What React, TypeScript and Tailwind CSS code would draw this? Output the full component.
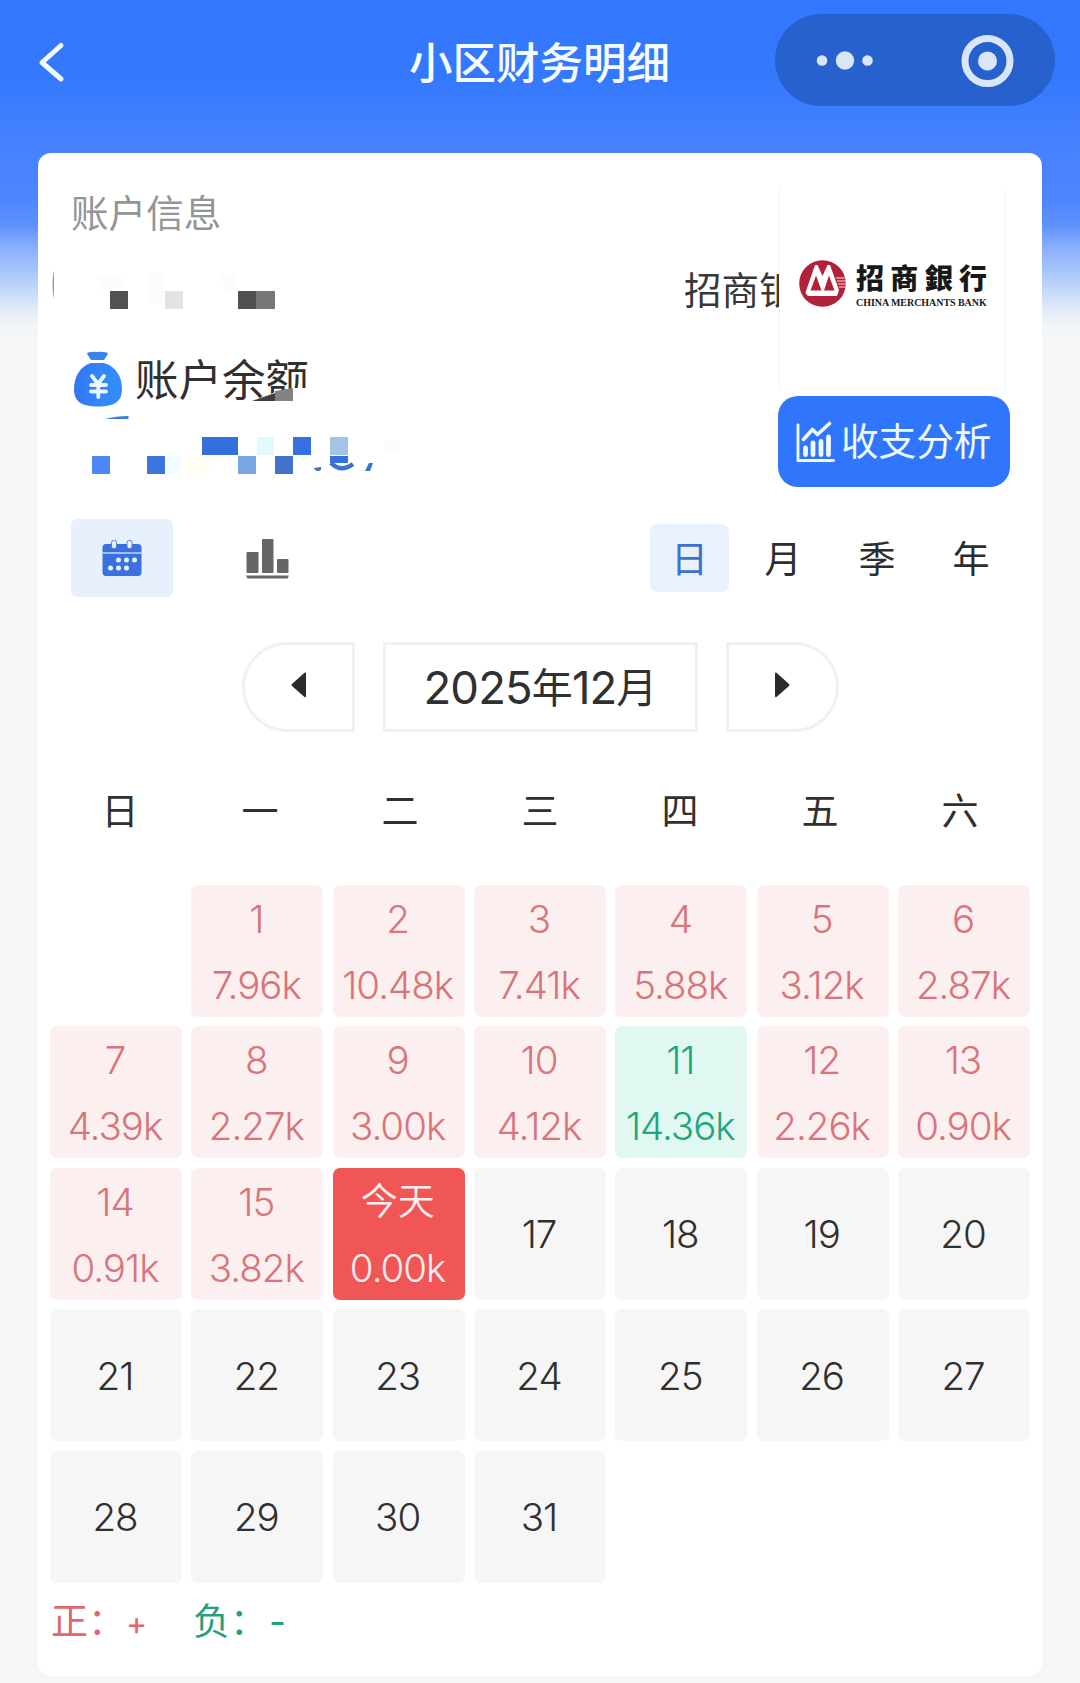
import React from "react";

type Tone = "up" | "down" | "today" | "idle";
type Day = { label: string; amount?: string; tone: Tone };

const amounts = [
  "7.96k", "10.48k", "7.41k", "5.88k", "3.12k", "2.87k", "4.39k", "2.27k",
  "3.00k", "4.12k", "14.36k", "2.26k", "0.90k", "0.91k", "3.82k", "0.00k",
];

const days: Day[] = Array.from({ length: 31 }, (_, i) => {
  const n = i + 1;
  if (n === 16) return { label: "今天", amount: amounts[i], tone: "today" };
  if (n === 11) return { label: "11", amount: amounts[i], tone: "down" };
  if (n < 16) return { label: String(n), amount: amounts[i], tone: "up" };
  return { label: String(n), tone: "idle" };
});

const tones: Record<Tone, string> = {
  up: "bg-[#fcefef] text-[#d8757a]",
  down: "bg-[#e1f8f2] text-[#1fa67a]",
  today: "bg-[#f05656] text-[#fff0f0]",
  idle: "bg-[#f6f6f6] text-[#303030]",
};

function DayCell({ day }: { day: Day }) {
  return (
    <div className={`flex h-[132px] flex-col items-center rounded-[7px] pt-px pr-[2px] font-[350] ${tones[day.tone]} ${day.amount ? "" : "justify-center"}`}>
      <span className={`leading-[66px] whitespace-nowrap ${day.tone === "today" ? "text-[37px]" : "text-[38.500px] tracking-[-1px]"}`}>{day.label}</span>
      {day.amount && <span className="text-[38.500px] leading-[66px] tracking-[-1px] whitespace-nowrap">{day.amount}</span>}
    </div>
  );
}

function Header() {
  return (
    <header className="flex h-[153px] items-start">
      <svg className="mt-[40px] ml-[36px] h-[44px] w-[32px]" viewBox="0 0 32 44" fill="none" stroke="#f0faff" strokeWidth="5" strokeLinecap="round" strokeLinejoin="round">
        <path d="M25 5.500L6 22.500L25 39" />
      </svg>
      <h1 className="mt-[33px] ml-[341px] w-[270px] text-[43.500px] leading-[60px] font-medium whitespace-nowrap text-[#f5fbff]">小区财务明细</h1>
      <div className="mt-[14px] ml-[96px] flex h-[92px] w-[280px] items-center rounded-full bg-[#2761cd]">
        <svg className="h-full w-full" viewBox="0 0 280 92" fill="#d9e5f8">
          <circle cx="47" cy="46.500" r="5.300" />
          <circle cx="70" cy="46.500" r="9.200" />
          <circle cx="92.500" cy="46.500" r="5.300" />
          <circle cx="212.500" cy="47" r="22.500" fill="none" stroke="#d9e5f8" strokeWidth="7" />
          <circle cx="212.500" cy="47" r="9.500" />
        </svg>
      </div>
    </header>
  );
}

function BankLogo() {
  return (
    <div className="flex h-[202px] w-[227px] shrink-0 items-center border-x border-[#f3f3f3] bg-white pb-[11px] pl-[19px]">
      <svg className="h-[47px] w-[47px] shrink-0" viewBox="0 0 47 47">
        <circle cx="23.500" cy="23.500" r="23.300" fill="#b3203a" />
        <path d="M7 31L16 5H18.500L23.500 16L28.500 5H31L40 30L38 36H9L6.500 33Z" fill="#fff" />
        <path d="M17 15.500L22.500 30.500H11.500ZM30 15.500L35.500 30.500H25Z" fill="#b3203a" />
        <path d="M22 23L24 29L25.500 23Z" fill="#fff" />
        <path d="M37 18H47M38 21H47M39 24H47M40 27H47" stroke="#f6dfe3" strokeWidth="1" />
      </svg>
      <div className="ml-[10px] w-[131px] pt-[3px]">
        <div className="flex justify-between text-[28px] leading-[34px] font-black text-[#181818]">
          <span>招</span><span>商</span><span>銀</span><span>行</span>
        </div>
        <div className="mt-[2px] font-['Liberation_Serif',serif] text-[10px] leading-[10px] font-bold tracking-[-0.05px] whitespace-nowrap text-[#181818]">CHINA MERCHANTS BANK</div>
      </div>
    </div>
  );
}

function Account() {
  return (
    <section className="relative h-[345px] shrink-0">
      <div className="flex h-full justify-between pr-[32px] pl-[33px]">
        <div className="pt-[34px]">
          <h2 className="text-[37.600px] leading-[54px] whitespace-nowrap text-[#959595]">账户信息</h2>
          <div className="mt-[108px] flex h-[60px] items-center">
            <svg className="h-[56px] w-[52px]" viewBox="0 0 52 56">
              <defs>
                <linearGradient id="bag" x1="0" x2="1"><stop stopColor="#3277f4" /><stop offset="1" stopColor="#3490fb" /></linearGradient>
              </defs>
              <path d="M17 1.500Q15.500 1.500 16.500 3.500L20 9H33L36.500 3.500Q37.500 1.500 35.500 1.500Q31 .5 26 1Q21 .5 17 1.500Z" fill="#3a82ec" />
              <path d="M20 12H33C45 15 51 26 51 38C51 51 43 55.500 27 55.500C11 55.500 3 51 3 38C3 26 9 15 20 12Z" fill="url(#bag)" />
              <path d="M21 25L27 33L33 25M20 34H35M20 40.500H35M27.300 33V46" fill="none" stroke="#eaf7ff" strokeWidth="3.800" strokeLinecap="round" />
            </svg>
            <span className="ml-[12px] pt-[2px] text-[43.500px] leading-[60px] text-[#303030]">账户余额</span>
          </div>
        </div>
        <div className="flex flex-col items-end pt-[35px]">
          <div className="flex h-[208px] items-start">
            <div className="w-[95px] overflow-hidden text-[37.600px] leading-[54px] whitespace-nowrap text-[#383838]"><div className="pt-[76px]">招商银行</div></div>
            <div className="mr-[4px]"><BankLogo /></div>
          </div>
          <button className="flex h-[91px] w-[232px] items-center rounded-[20px] bg-[#3076fd] pl-[18px] text-[37.600px] whitespace-nowrap text-[#eefaff]">
            <svg className="mr-[6px] h-[42px] w-[39px] shrink-0" viewBox="0 0 39 42" fill="none" stroke="#eefaff" strokeLinecap="round">
              <path d="M2 4V39.500H37.500" strokeWidth="2.800" />
              <path d="M9.500 27V33.500M17 22V33.500M25 20.500V33.500M32.500 16V33.500" strokeWidth="4.800" />
              <path d="M7.500 18.500L16.500 8.500L21.500 13.500L33.500 2.500" strokeWidth="3.600" strokeLinejoin="round" />
            </svg>
            <span className="pt-px leading-[54px]">收支分析</span>
          </button>
        </div>
      </div>
      {/* Privacy mosaic over the account number and balance */}
      <svg className="absolute top-[97px] left-[12px] h-[240px] w-[388px]" viewBox="50 250 388 240">
        <path d="M54 270Q51 284 54 299Z" fill="#999" />
        <path d="M96 277H124V291H104ZM148 273H163V304H148ZM220 274L236 275L238 291H226Z" fill="#fcfcfc" />
        <path d="M110 291h18v18h-18z" fill="#525252" />
        <path d="M165 291h18v18h-18z" fill="#e3e3e3" />
        <path d="M238 291h18v18h-18z" fill="#505050" />
        <path d="M256 291h19v18h-19z" fill="#777" />
        <path d="M275 392L294 388H310V404H250Z" fill="#fff" />
        <path d="M252 401L275 393V401Z" fill="#404040" />
        <path d="M275 391L293 388V401H275Z" fill="#828282" />
        <path d="M105 419Q116 416 128.500 416V419Z" fill="#397cdc" />
        <path d="M92 456h18v18H92z" fill="#4f86f7" />
        <path d="M147 456h18v18h-18z" fill="#3e74dd" />
        <path d="M166 456h14v18h-14z" fill="#f1feff" />
        <path d="M183 456h28v18h-28z" fill="#fffff4" />
        <path d="M202 437h36v18h-36z" fill="#3370dc" />
        <path d="M238 456h18v18h-18z" fill="#79a5e1" />
        <path d="M257 437h17v18h-17z" fill="#e2fafb" />
        <path d="M275 456h18v18h-18z" fill="#4472cb" />
        <path d="M293 437h18v18h-18z" fill="#3670e6" />
        <path d="M330 437h18v18h-18z" fill="#a5c3e7" />
        <path d="M330 456h18v7h-18z" fill="#3670df" />
        <path d="M314 468L321 467Q322 471 318 471Q315 471 314 468Z" fill="#4770b5" />
        <path d="M331 463Q341 473 353 464" fill="none" stroke="#3d72cf" strokeWidth="4.500" />
        <path d="M369 463H373L370 471H365Z" fill="#3d72cf" />
        <path d="M385 440h15v11h-15z" fill="#fbfcfc" />
      </svg>
    </section>
  );
}

function Toolbar() {
  return (
    <div className="mt-[21px] flex h-[78px] items-center pl-[33px]">
      <div className="flex h-[78px] w-[102px] items-center justify-center rounded-[6px] bg-[#e8f0fd]">
        <svg className="h-[38px] w-[40px]" viewBox="0 0 40 38">
          <path d="M4 5H36Q39.500 5 39.500 8.500V33Q39.500 37 36 37H4Q.5 37 .5 33V8.500Q.5 5 4 5Z" fill="#3b70df" />
          <path d="M.5 14H39.500" stroke="#c4dcfa" strokeWidth="1.600" />
          <rect x="9.500" y="1.500" width="5" height="8" rx="2" fill="#e8f3ff" stroke="#4b7fe0" />
          <rect x="25" y="1.500" width="5" height="8" rx="2" fill="#e8f3ff" stroke="#4b7fe0" />
          <g fill="#e3f4ff">
            <circle cx="16.500" cy="21" r="2.500" /><circle cx="24.500" cy="21" r="2.500" /><circle cx="32.500" cy="21" r="2.500" />
            <circle cx="8.500" cy="29" r="2.500" /><circle cx="16.500" cy="29" r="2.500" /><circle cx="24.500" cy="29" r="2.500" />
          </g>
        </svg>
      </div>
      <svg className="mt-[2px] ml-[73px] h-[40px] w-[43px]" viewBox="0 0 43 40" fill="#666">
        <rect x=".5" y="13" width="12" height="21" rx="1" />
        <rect x="16" y="0" width="11.500" height="34" rx="1" />
        <rect x="31" y="20" width="11.500" height="14" rx="1" />
        <path d="M0 36.500H43L41.500 39.500H1.500Z" />
      </svg>
      <div className="ml-[361px] flex text-[37px] leading-[54px] text-[#2d2d2d]">
        <span className="flex h-[68px] w-[79px] items-center justify-center rounded-[8px] bg-[#e8f1fd] pt-[3px] text-[#3b72cf]">日</span>
        <span className="ml-[7px] flex w-[94px] items-center justify-center pt-[3px]">月</span>
        <span className="flex w-[94px] items-center justify-center pt-[3px]">季</span>
        <span className="flex w-[94px] items-center justify-center pt-[3px]">年</span>
      </div>
    </div>
  );
}

export default function App() {
  return (
    <div className="h-[1683px] w-[1080px] overflow-hidden bg-[#f6f6f6] bg-[linear-gradient(180deg,#3277fd_0px,#3479fd_80px,#4681ff_140px,#4c85ff_200px,#5f92fe_225px,#8db2fb_250px,#b4cefb_280px,#dbe7f9_305px,#f2f5f8_325px,#f6f6f6_338px)] bg-no-repeat font-['Inter','Noto_Sans_CJK_SC',sans-serif]">
      <Header />
      <main className="ml-[38px] flex h-[1523px] w-[1004px] flex-col rounded-[13px] bg-white">
        <Account />
        <Toolbar />
        <div className="mt-[45px] flex h-[90px] shrink-0 justify-center gap-[28px] text-[#303030]">
          <div className="flex w-[113px] items-center justify-center rounded-l-full border-[3px] border-[#f1f1f1]">
            <svg className="h-[26px] w-[15px] -translate-y-[2px]" viewBox="0 0 15 26" fill="#2b2b2b"><path d="M13.500 .8Q15 0 15 2V24Q15 26 13.500 25L1 14Q0 13 1 12Z" /></svg>
          </div>
          <div className="flex w-[315px] items-center justify-center border-[3px] border-[#f1f1f1] pt-[2px] text-[45.500px] leading-[60px] tracking-[-0.900px] whitespace-nowrap">
            2025<span className="text-[41px]">年</span>12<span className="text-[41px]">月</span>
          </div>
          <div className="flex w-[113px] items-center justify-center rounded-r-full border-[3px] border-[#f1f1f1]">
            <svg className="h-[26px] w-[15px] -translate-y-[2px]" viewBox="0 0 15 26" fill="#2b2b2b"><path d="M1.500 .8Q0 0 0 2V24Q0 26 1.500 25L14 14Q15 13 14 12Z" /></svg>
          </div>
        </div>
        <div className="mx-[12px] mt-[53px] grid grid-cols-7 text-center text-[37px] leading-[54px] text-[#303030]">
          {["日", "一", "二", "三", "四", "五", "六"].map((d) => <span key={d}>{d}</span>)}
        </div>
        <div className="mx-[12px] mt-[46px] grid grid-cols-[repeat(7,132px)] justify-between gap-y-[9.400px]">
          <div />
          {days.map((day) => <DayCell key={day.label} day={day} />)}
        </div>
        <div className="mt-[12px] flex pl-[13px] text-[37px] leading-[54px] whitespace-nowrap">
          <span className="w-[142px] text-[#e0686c]">正：<span className="ml-px text-[32px]">+</span></span>
          <span className="text-[#259f7c]">负：<span className="ml-[2px]">-</span></span>
        </div>
      </main>
    </div>
  );
}
